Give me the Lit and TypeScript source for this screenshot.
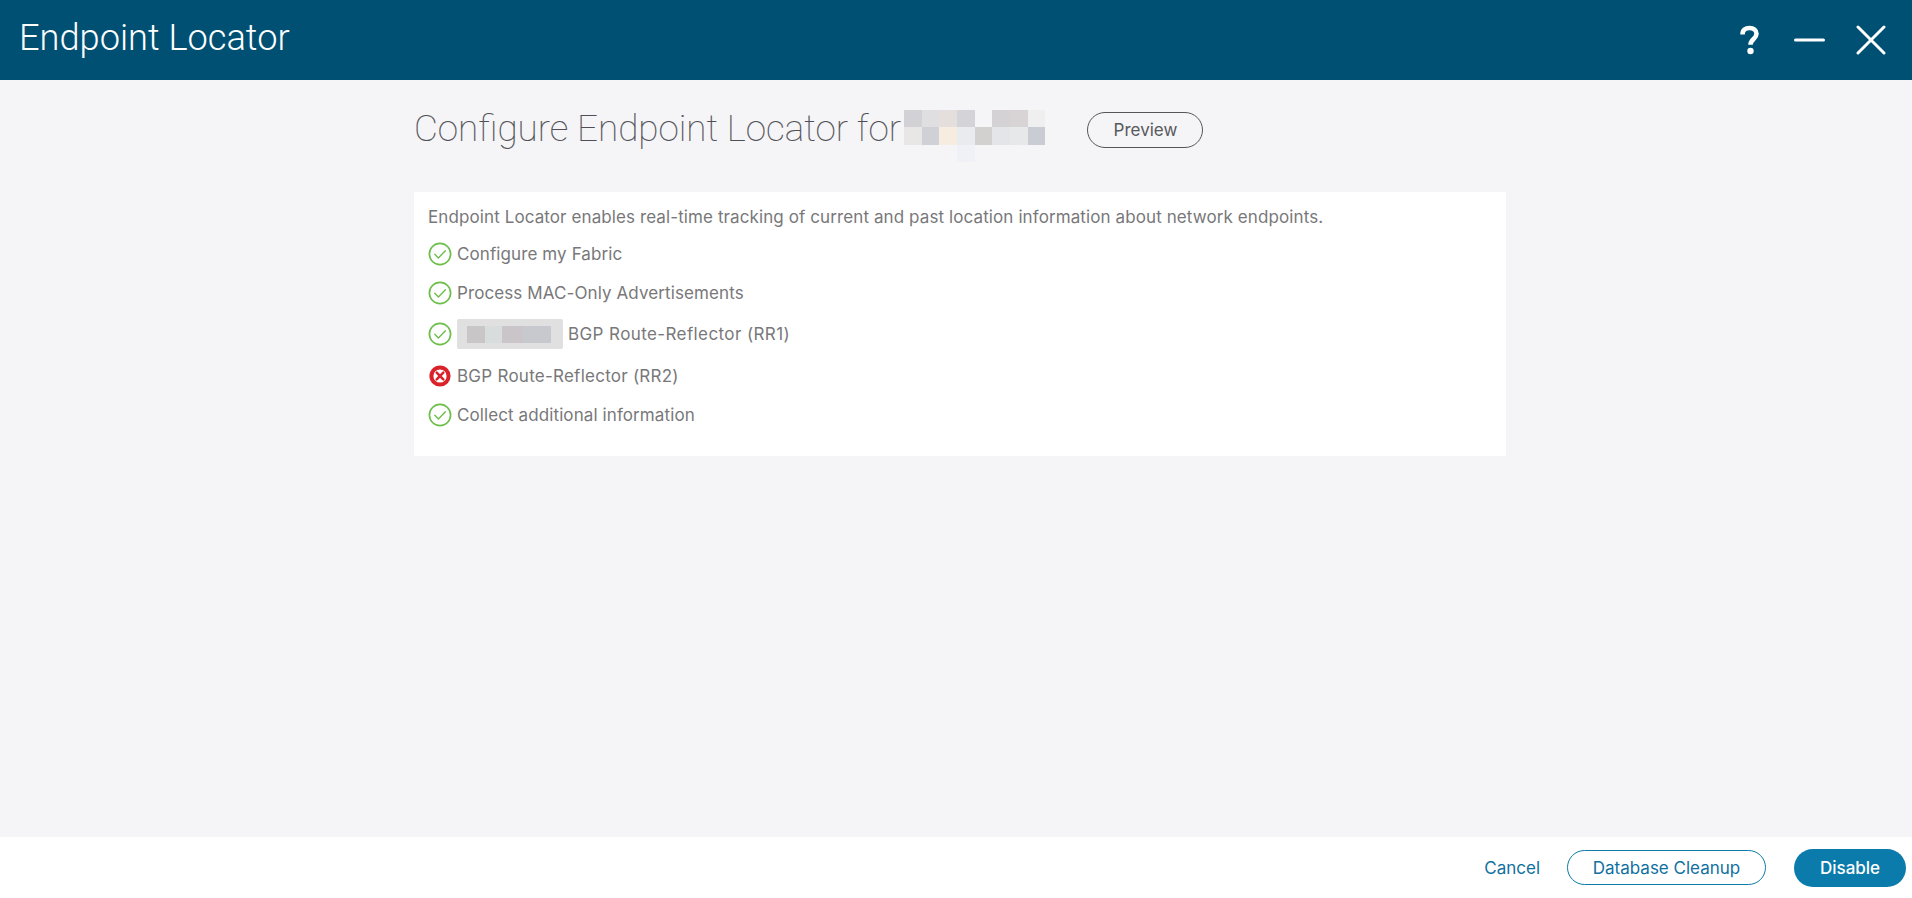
import { LitElement, html, css, svg } from "lit";
import { customElement } from "lit/decorators.js";

const mosaic = [
  ["#d2d2d6", "#dfdfe2", "#e4dfdc", "#d3d3d8", "transparent", "#d4d2d5", "#d8d4d5", "#f0eff0"],
  ["#e9e7e5", "#cfd1d6", "#f6ece0", "#e9ebef", "#d2d1d0", "#e4e5e8", "#e6e8ea", "#c9ccd3"],
  ["transparent", "transparent", "transparent", "#f0f1f6", "transparent", "transparent", "transparent", "transparent"],
];

const okIcon = svg`<svg class="ic" viewBox="0 0 24 24" width="24" height="24" fill="none"><circle cx="12" cy="12" r="10.6" stroke="#6ebe4a" stroke-width="1.7"/><path d="M6.8 12.3l3.6 3.6 7-7.2" stroke="#6ebe4a" stroke-width="1.4" stroke-linecap="round" stroke-linejoin="round"/></svg>`;
const errIcon = svg`<svg class="ic" viewBox="0 0 24 24" width="24" height="24" fill="none"><circle cx="12" cy="12" r="8.6" fill="#fff" stroke="#d9232a" stroke-width="4"/><path d="M8.7 8.7l6.6 6.6M15.3 8.7l-6.6 6.6" stroke="#d9232a" stroke-width="2.6" stroke-linecap="round"/></svg>`;

@customElement("app-root")
export class AppRoot extends LitElement {
  static styles = css`
    :host { display: flex; flex-direction: column; height: 100vh; background: #f5f4f7; font-family: Inter, "Liberation Sans", sans-serif; overflow: hidden; }
    .bar { height: 80px; flex: none; background: #005073; display: flex; align-items: center; color: #fff; padding: 0 26px 0 19px; }
    .app-title { font-family: Roboto, sans-serif; font-weight: 300; font-size: 36.2px; flex: 1; padding-bottom: 6px; }
    .tools { display: flex; align-items: center; gap: 0; }
    .tools svg { display: block; }
    .main { flex: 1; padding-left: 414px; }
    .head { height: 112px; box-sizing: border-box; padding-bottom: 15px; display: flex; align-items: center; }
    h1 { margin: 0 3px 0 0; font-family: Roboto, sans-serif; font-weight: 100; font-size: 36.8px; color: #4f4f55; white-space: nowrap; -webkit-text-stroke: 0.15px #4f4f55; }
    .mosaic { display: grid; grid-template-columns: repeat(8, 17.7px); grid-auto-rows: 17.5px; margin: 15px 0 0 0; }
    .pv { margin: 2px 0 0 42px; width: 116px; height: 36px; box-sizing: border-box; border: 1px solid #55565a; border-radius: 18px; display: flex; align-items: center; justify-content: center; font-size: 17px; color: #58595c; }
    .panel { width: 1092px; height: 264px; box-sizing: border-box; background: #fff; padding: 13px 14px; color: #78787a; font-size: 17px; letter-spacing: 0.1px; }
    .intro { line-height: 24px; height: 24px; white-space: nowrap; }
    .row { display: flex; align-items: center; gap: 5px; white-space: nowrap; position: relative; }
    .row.route { letter-spacing: 0.25px; }
    .row.wide { letter-spacing: 0.4px; }
    .ic { flex: none; }
    .blur { width: 106px; height: 30px; background: #e0e0e0; border-radius: 2px; display: flex; align-items: center; padding-left: 10px; box-sizing: border-box; }
    .blur i { display: block; height: 17px; }
    .foot { height: 61px; flex: none; background: #fff; display: flex; align-items: center; justify-content: flex-end; padding-right: 6px; font-size: 17px; }
    .cancel { color: #11709f; margin-right: 27px; }
    .db { width: 199px; height: 35px; box-sizing: border-box; border: 1px solid #0e7aa8; border-radius: 18px; color: #11709f; display: flex; align-items: center; justify-content: center; margin-right: 28px; }
    .dis { width: 112px; height: 38px; border-radius: 19px; background: #0a7bab; color: #fff; display: flex; align-items: center; justify-content: center; font-weight: 500; }
  `;

  private row(icon: unknown, text: string, top: number, blur = false, cls = "") {
    return html`<div class="row ${cls}" style="margin-top:${top}px">${icon}${blur
      ? html`<span class="blur"><i style="width:18px;background:#c8c6c7"></i><i style="width:17px;background:#d8dcdc"></i><i style="width:21px;background:#c9c5c8"></i><i style="width:28px;background:#c8c9cf"></i></span>`
      : ""}<span>${text}</span></div>`;
  }

  render() {
    return html`
      <div class="bar">
        <div class="app-title">Endpoint Locator</div>
        <div class="tools">
          <svg style="margin-right:-1px" width="27" height="32" viewBox="0 0 26 32" fill="none"><path d="M7 10.500C7 6 10 4 14 4s7 2.300 7 5.800c0 5.200-6 5.200-6 11" stroke="#fff" stroke-width="4.600"/><circle cx="15" cy="27" r="3.200" fill="#fff"/></svg>
          <svg style="margin-left:33px" width="31" height="4" viewBox="0 0 31 4"><rect width="31" height="3" y="0.500" rx="1.500" fill="#fff"/></svg>
          <svg style="margin-left:31px" width="30" height="30" viewBox="0 0 30 30"><path d="M2 2l26 26M28 2L2 28" stroke="#fff" stroke-width="3" stroke-linecap="round"/></svg>
        </div>
      </div>
      <div class="main">
        <div class="head">
          <h1>Configure Endpoint Locator for</h1>
          <div class="mosaic">
            ${mosaic.flat().map((c) => html`<span style="background:${c}"></span>`)}
          </div>
          <div class="pv">Preview</div>
        </div>
        <div class="panel">
          <div class="intro">Endpoint Locator enables real-time tracking of current and past location information about network endpoints.</div>
          ${this.row(okIcon, "Configure my Fabric", 13)}
          ${this.row(okIcon, "Process MAC-Only Advertisements", 15)}
          ${this.row(okIcon, "BGP Route-Reflector (RR1)", 14, true, "wide")}
          ${this.row(errIcon, "BGP Route-Reflector (RR2)", 15, false, "route")}
          ${this.row(okIcon, "Collect additional information", 15)}
        </div>
      </div>
      <div class="foot">
        <span class="cancel">Cancel</span>
        <span class="db">Database Cleanup</span>
        <span class="dis">Disable</span>
      </div>
    `;
  }
}
